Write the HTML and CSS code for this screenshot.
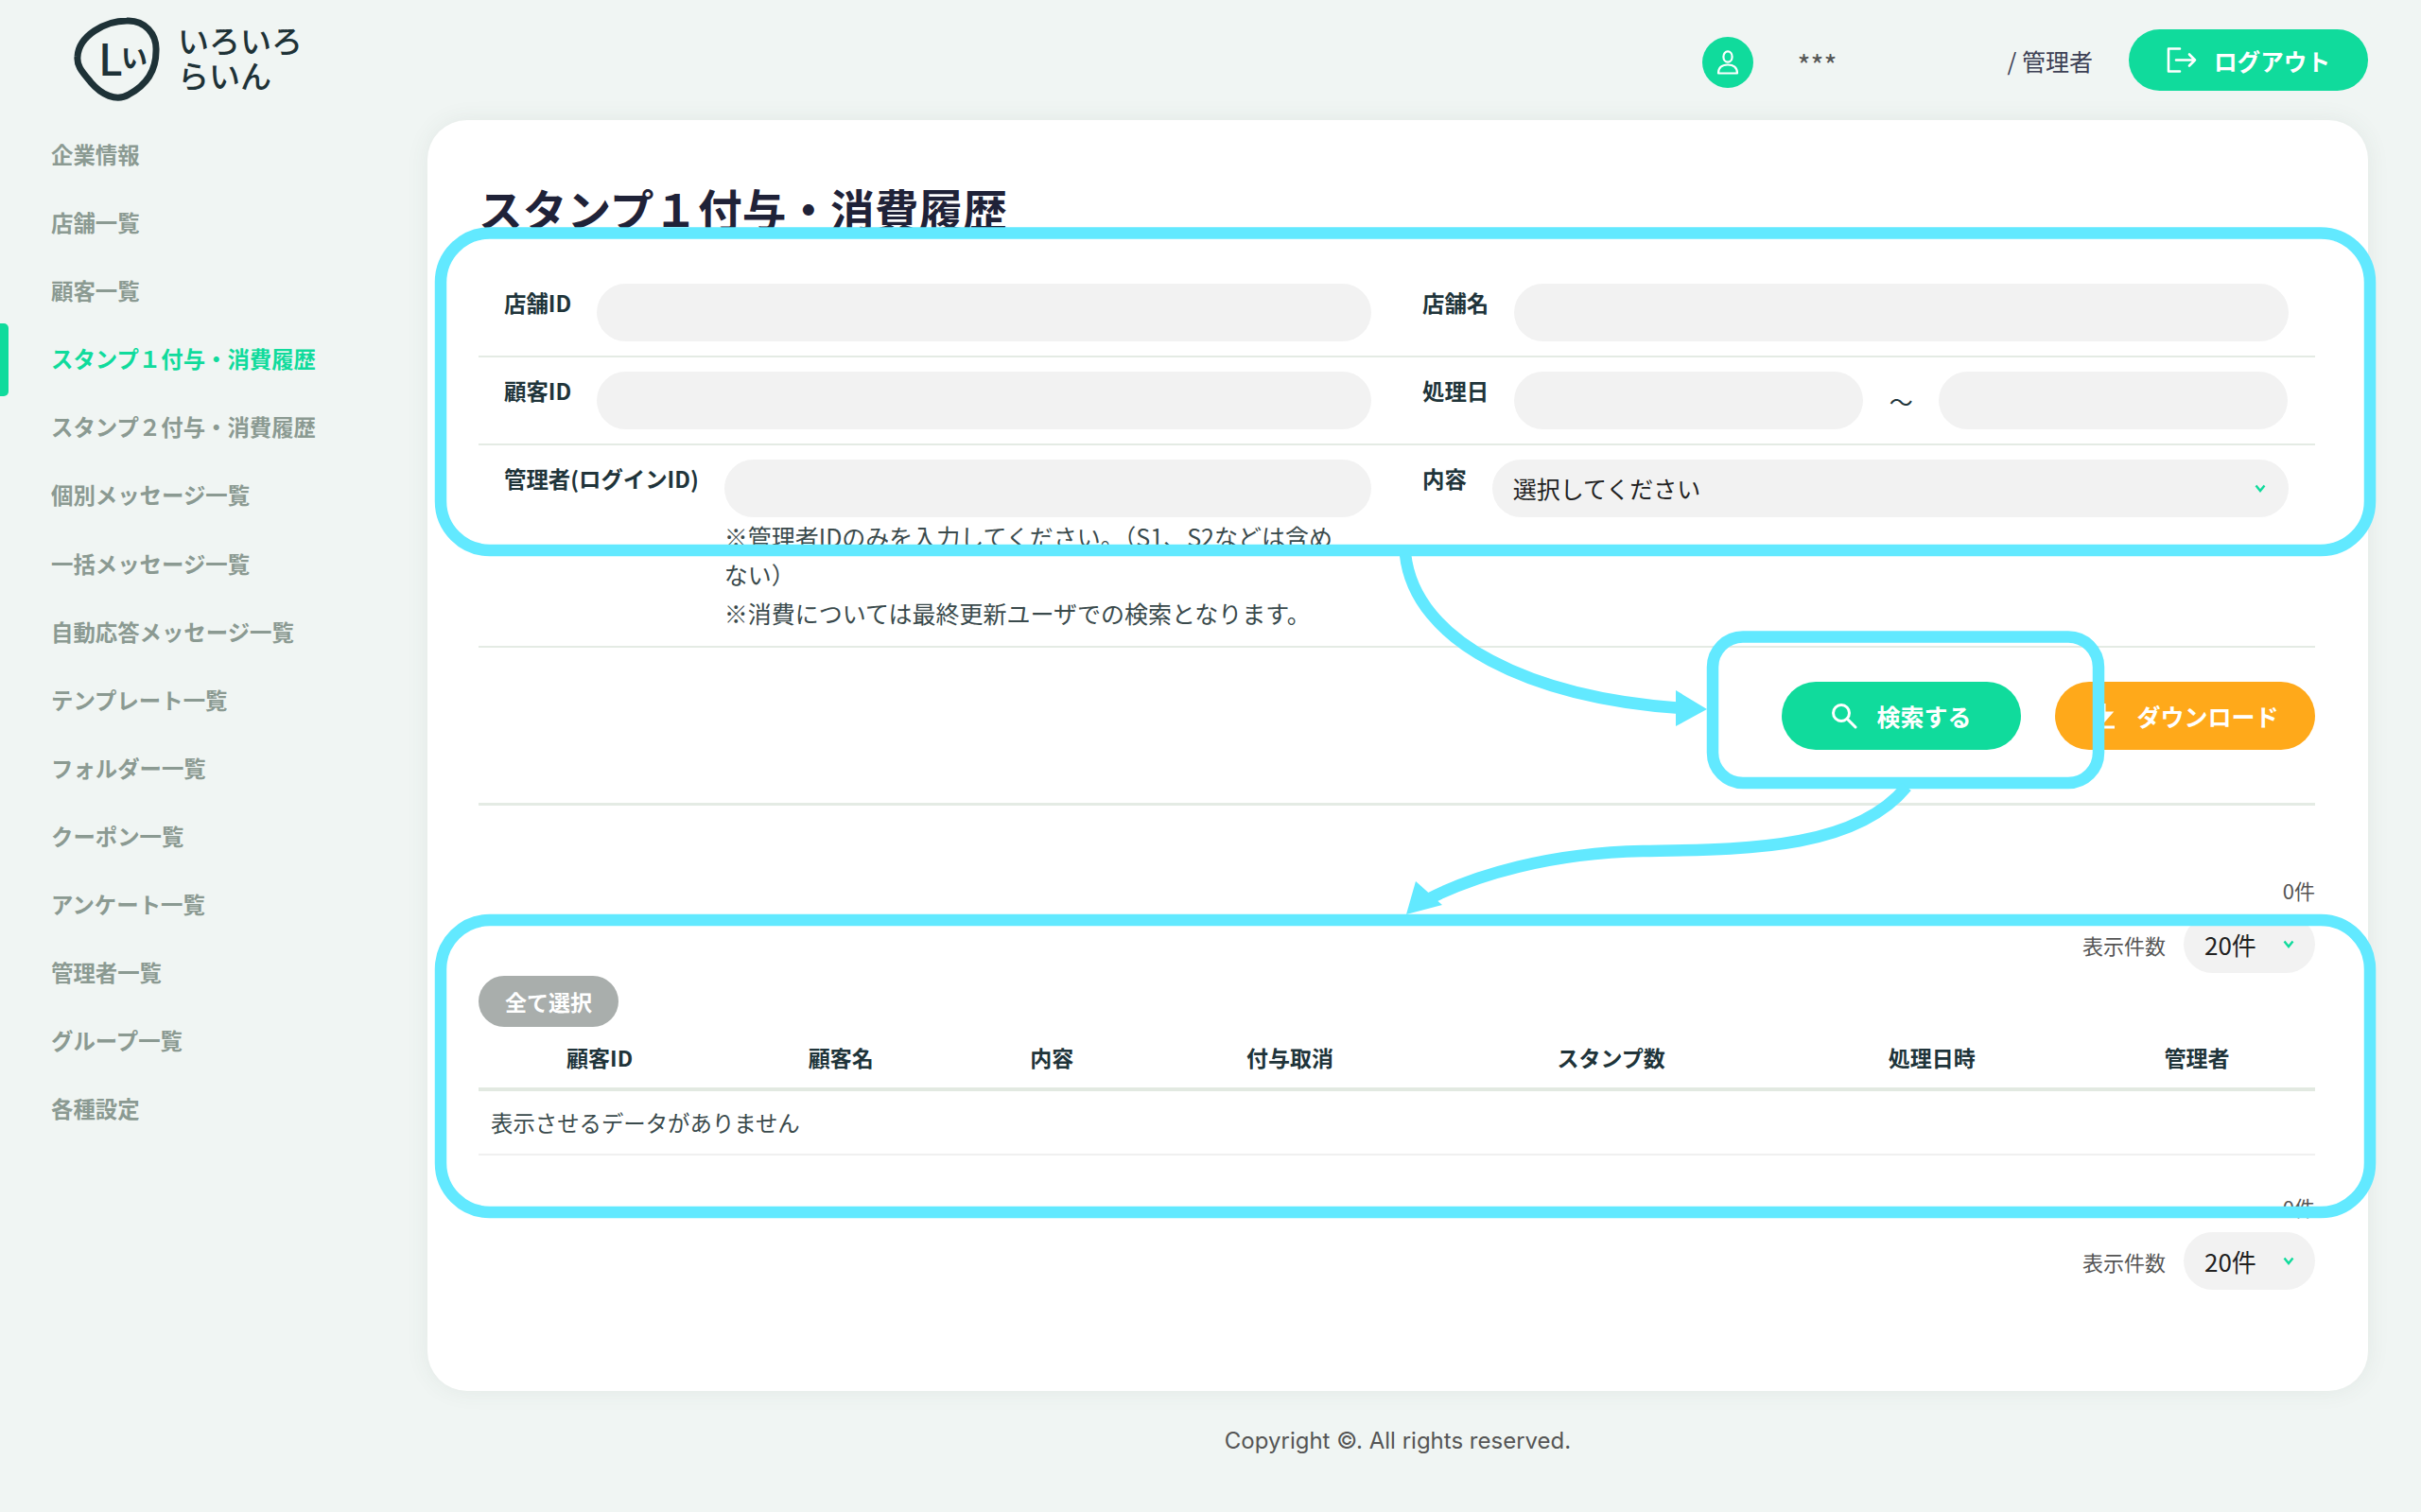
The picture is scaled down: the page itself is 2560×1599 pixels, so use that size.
FILE: index.html
```html
<!DOCTYPE html>
<html lang="ja">
<head>
  <meta charset="UTF-8">
  <meta name="viewport" content="width=device-width, initial-scale=1.0">
  <title>スタンプ１付与・消費履歴</title>
  <link rel="stylesheet" href="styles.css">
</head>
<body>
  <div class="app">
    <aside class="sidebar">
      <div class="logo">
        <svg class="logo-mark" width="91" height="90" viewBox="77 18 91 90">
          <path d="M133 22C152 21 165 36 164 54C164 78 150 92 135 100C122 108 106 100 95 87C86 76 80 70 81 60C82 38 110 22 133 22Z" fill="none" stroke="#1e3237" stroke-width="7"/>
          <text x="103" y="80" class="logo-l">L</text>
          <text x="127" y="72" class="logo-i">い</text>
        </svg>
        <div class="logo-text">いろいろ<br>らいん</div>
      </div>
      <ul class="nav">
        <li>企業情報</li>
        <li>店舗一覧</li>
        <li>顧客一覧</li>
        <li class="active">スタンプ１付与・消費履歴</li>
        <li>スタンプ２付与・消費履歴</li>
        <li>個別メッセージ一覧</li>
        <li>一括メッセージ一覧</li>
        <li>自動応答メッセージ一覧</li>
        <li>テンプレート一覧</li>
        <li>フォルダー一覧</li>
        <li>クーポン一覧</li>
        <li>アンケート一覧</li>
        <li>管理者一覧</li>
        <li>グループ一覧</li>
        <li>各種設定</li>
      </ul>
    </aside>

    <main class="main">
      <header class="topbar">
        <span class="avatar">
          <svg width="24" height="26" viewBox="0 0 24 26" fill="none" stroke="#fff" stroke-width="2.2">
            <ellipse cx="12" cy="7" rx="4.6" ry="5.6"/>
            <path d="M2 24.5C2 18 6 15.5 12 15.5S22 18 22 24.5Z" stroke-linejoin="round"/>
          </svg>
        </span>
        <span class="user-name">***</span>
        <span class="user-role">/ 管理者</span>
        <button class="btn btn-logout" type="button">
          <svg width="32" height="27" viewBox="0 0 32 27" fill="none" stroke="#fff" stroke-width="2.6" stroke-linecap="round" stroke-linejoin="round">
            <path d="M14 1.5H2V25.5H14"/>
            <path d="M10 13.5H30M24 7.5L30 13.5L24 19.5"/>
          </svg>
          ログアウト
        </button>
      </header>

      <section class="card">
        <h1 class="page-title">スタンプ１付与・消費履歴</h1>

        <form class="search-form">
          <div class="form-row">
            <div class="field">
              <label>店舗ID</label>
              <div class="field-body"><input class="text-input" type="text"></div>
            </div>
            <div class="field">
              <label>店舗名</label>
              <div class="field-body"><input class="text-input" type="text"></div>
            </div>
          </div>
          <div class="form-row">
            <div class="field">
              <label>顧客ID</label>
              <div class="field-body"><input class="text-input" type="text"></div>
            </div>
            <div class="field">
              <label>処理日</label>
              <div class="field-body date-range">
                <input class="text-input" type="text">
                <span class="tilde">～</span>
                <input class="text-input" type="text">
              </div>
            </div>
          </div>
          <div class="form-row">
            <div class="field">
              <label>管理者(ログインID)</label>
              <div class="field-body">
                <input class="text-input" type="text">
                <p class="note">※管理者IDのみを入力してください。（S1、S2などは含め<br>ない）<br>※消費については最終更新ユーザでの検索となります。</p>
              </div>
            </div>
            <div class="field">
              <label>内容</label>
              <div class="field-body">
                <div class="select-box">
                  選択してください
                  <svg class="chevron" width="12" height="9" viewBox="0 0 12 9"><path d="M1.5 1.5L6 7L10.5 1.5" fill="none" stroke="#10db9c" stroke-width="2.4"/></svg>
                </div>
              </div>
            </div>
          </div>
          <div class="form-actions">
            <button class="btn btn-search" type="button">
              <svg width="28" height="28" viewBox="0 0 28 28" fill="none" stroke="#fff" stroke-width="3" stroke-linecap="round">
                <circle cx="11" cy="11" r="8.5"/>
                <path d="M17.5 17.5L26 26"/>
              </svg>
              検索する
            </button>
            <button class="btn btn-download" type="button">
              <svg width="28" height="28" viewBox="0 0 28 28" fill="none" stroke="#fff" stroke-width="3">
                <path d="M14 1V17"/>
                <path d="M7 11L14 19L21 11Z" fill="#fff"/>
                <path d="M3 26H25"/>
              </svg>
              ダウンロード
            </button>
          </div>
        </form>

        <div class="result-count first">0件</div>
        <div class="per-page">
          <span>表示件数</span>
          <div class="select-box small">20件
            <svg class="chevron" width="12" height="9" viewBox="0 0 12 9"><path d="M1.5 1.5L6 7L10.5 1.5" fill="none" stroke="#10db9c" stroke-width="2.4"/></svg>
          </div>
        </div>

        <button class="btn btn-select-all" type="button">全て選択</button>

        <table class="result-table">
          <colgroup>
            <col class="c1"><col class="c2"><col class="c3"><col class="c4"><col class="c5"><col class="c6"><col class="c7">
          </colgroup>
          <thead>
            <tr>
              <th>顧客ID</th>
              <th>顧客名</th>
              <th>内容</th>
              <th>付与取消</th>
              <th>スタンプ数</th>
              <th>処理日時</th>
              <th>管理者</th>
            </tr>
          </thead>
          <tbody>
            <tr>
              <td colspan="7">表示させるデータがありません</td>
            </tr>
          </tbody>
        </table>

        <div class="result-count second">0件</div>
        <div class="per-page">
          <span>表示件数</span>
          <div class="select-box small">20件
            <svg class="chevron" width="12" height="9" viewBox="0 0 12 9"><path d="M1.5 1.5L6 7L10.5 1.5" fill="none" stroke="#10db9c" stroke-width="2.4"/></svg>
          </div>
        </div>
      </section>

      <footer class="copyright">Copyright ©. All rights reserved.</footer>
    </main>
  </div>

  <!-- annotation drawn on top of the screenshot -->
  <svg class="markup" width="2560" height="1599" viewBox="0 0 2560 1599" fill="none" stroke="#62e9ff" stroke-width="12.5">
    <rect x="466" y="246.500" width="2040" height="335.500" rx="52"/>
    <rect x="466" y="973" width="2040" height="309" rx="52"/>
    <rect x="1811" y="673.500" width="408" height="154.500" rx="32"/>
    <path d="M1486 586C1496 680 1620 738 1778 749"/>
    <path d="M1805 750L1772 730V768Z" fill="#62e9ff" stroke="none"/>
    <path d="M2016 832C1960 900 1840 898 1737 900C1640 902 1560 925 1508 952"/>
    <path d="M1487 967L1497 932L1525 957Z" fill="#62e9ff" stroke="none"/>
  </svg>
</body>
</html>
```

FILE: styles.css
```css
* {
  margin: 0;
  padding: 0;
  box-sizing: border-box;
}
body {
  font-family: "Noto Sans CJK JP", "Noto Sans", sans-serif;
  background-color: #f0f5f3;
  color: #20343a;
  width: 2560px;
  height: 1599px;
  overflow: hidden;
  position: relative;
}
.app {
  display: grid;
  grid-template-columns: 452px 1fr;
}

/* sidebar */
.logo {
  height: 127px;
  padding: 18px 0 0 78px;
  display: flex;
  gap: 19px;
}
.logo-l {
  font-size: 46px;
  font-weight: 500;
  fill: #1e3237;
}
.logo-i {
  font-size: 28px;
  font-weight: 700;
  fill: #1e3237;
}
.logo-text {
  font-size: 33px;
  font-weight: 500;
  line-height: 37px;
  color: #1e3237;
  padding-top: 6px;
}
.nav {
  list-style: none;
}
.nav li {
  position: relative;
  height: 72.100px;
  line-height: 72px;
  padding-left: 54px;
  font-size: 23.400px;
  font-weight: 700;
  color: #8b9a92;
}
.nav li.active {
  color: #10db9c;
}
.nav li.active::before {
  content: "";
  position: absolute;
  left: 0;
  top: -1px;
  width: 9px;
  height: 77px;
  background-color: #10db9c;
  border-radius: 0 5px 5px 0;
}

/* top bar */
.topbar {
  height: 127px;
  display: flex;
  align-items: center;
  padding-right: 56px;
  justify-content: flex-end;
}
.avatar {
  width: 54px;
  height: 54px;
  margin-top: 5px;
  border-radius: 50%;
  background-color: #10db9c;
  display: flex;
  align-items: center;
  justify-content: center;
}
.user-name {
  width: 222px;
  margin-left: 47px;
  margin-top: 8px;
  font-size: 30px;
  color: #555;
}
.user-role {
  margin-right: 38px;
  font-size: 25px;
  color: #3c4054;
}
.btn {
  border: none;
  border-radius: 40px;
  color: #fff;
  font-family: inherit;
  font-weight: 700;
  display: flex;
  align-items: center;
  justify-content: center;
  cursor: pointer;
}
.btn-logout {
  width: 253px;
  height: 65px;
  gap: 18px;
  background-color: #10db9c;
  font-size: 24.600px;
}

/* card */
.card {
  width: 2052px;
  height: 1344px;
  padding: 64px 56px 0 54px;
  background-color: #fff;
  border-radius: 42px;
  box-shadow: 0 0 24px rgba(60, 90, 80, 0.08);
}
.page-title {
  height: 94px;
  font-size: 46.700px;
  line-height: 58px;
  font-weight: 700;
  color: #1f2238;
}
.form-row {
  display: grid;
  grid-template-columns: 917px 916px;
  gap: 54px;
  padding: 15px 28px 15px 27px;
  border-bottom: 2px solid #e4ebe4;
}
.form-row + .form-row {
  padding-top: 15px;
}
.field {
  display: flex;
}
.field label {
  margin-right: 27px;
  font-size: 23.400px;
  font-weight: 700;
  line-height: 40px;
  white-space: nowrap;
}
.field-body {
  flex: 1;
}
.text-input {
  display: block;
  width: 100%;
  height: 61px;
  border: none;
  border-radius: 31px;
  background-color: #f2f2f2;
}
.date-range {
  display: flex;
  align-items: center;
}
.date-range .text-input {
  width: 369px;
}
.tilde {
  width: 80px;
  text-align: center;
  font-size: 25px;
}
.note {
  font-size: 25px;
  line-height: 40.400px;
  color: #3a4a4c;
}
.select-box {
  position: relative;
  height: 61px;
  line-height: 61px;
  padding-left: 22px;
  border-radius: 31px;
  background-color: #f2f2f2;
  font-size: 25px;
  color: #222;
}
.chevron {
  position: absolute;
  right: 24px;
  top: 26px;
}
.form-actions {
  display: flex;
  justify-content: flex-end;
  gap: 36px;
  padding: 36px 0 56px;
  border-bottom: 3px solid #e4ebe4;
}
.btn-search,
.btn-download {
  height: 72px;
  gap: 20px;
  font-size: 25px;
}
.btn-search {
  width: 253px;
  background-color: #10db9c;
}
.btn-download {
  width: 275px;
  background-color: #ffa91a;
}

/* results */
.result-count {
  text-align: right;
  font-size: 22px;
  line-height: 36px;
  color: #555;
}
.result-count.first {
  margin-top: 71px;
}
.result-count.second {
  margin-top: 36px;
}
.per-page {
  display: flex;
  justify-content: flex-end;
  align-items: center;
  gap: 19px;
  margin-top: 9px;
  font-size: 22px;
  color: #555;
}
.select-box.small {
  width: 139px;
  font-size: 26px;
}
.select-box.small .chevron {
  right: 22px;
  top: 26px;
}
.btn-select-all {
  width: 148px;
  height: 54px;
  margin-top: 3px;
  background-color: #a9aeac;
  font-size: 23px;
}
.result-table {
  width: 100%;
  table-layout: fixed;
  border-collapse: collapse;
}
.c1 { width: 256px; }
.c2 { width: 254px; }
.c3 { width: 192px; }
.c4 { width: 311px; }
.c5 { width: 368px; }
.c6 { width: 310px; }
.c7 { width: 250px; }
.result-table th {
  height: 66px;
  font-size: 23px;
  font-weight: 700;
  border-bottom: 4px solid #e2e9e1;
}
.result-table td {
  height: 69px;
  padding-left: 13px;
  font-size: 23.400px;
  color: #3a4a4c;
  border-bottom: 2px solid #f0f0f0;
}

/* footer */
.copyright {
  width: 2052px;
  margin-top: 33px;
  text-align: center;
  font-family: "Inter", "Noto Sans", sans-serif;
  font-size: 24px;
  line-height: 40px;
  color: #555;
}

/* annotation */
.markup {
  position: absolute;
  left: 0;
  top: 0;
}
```
